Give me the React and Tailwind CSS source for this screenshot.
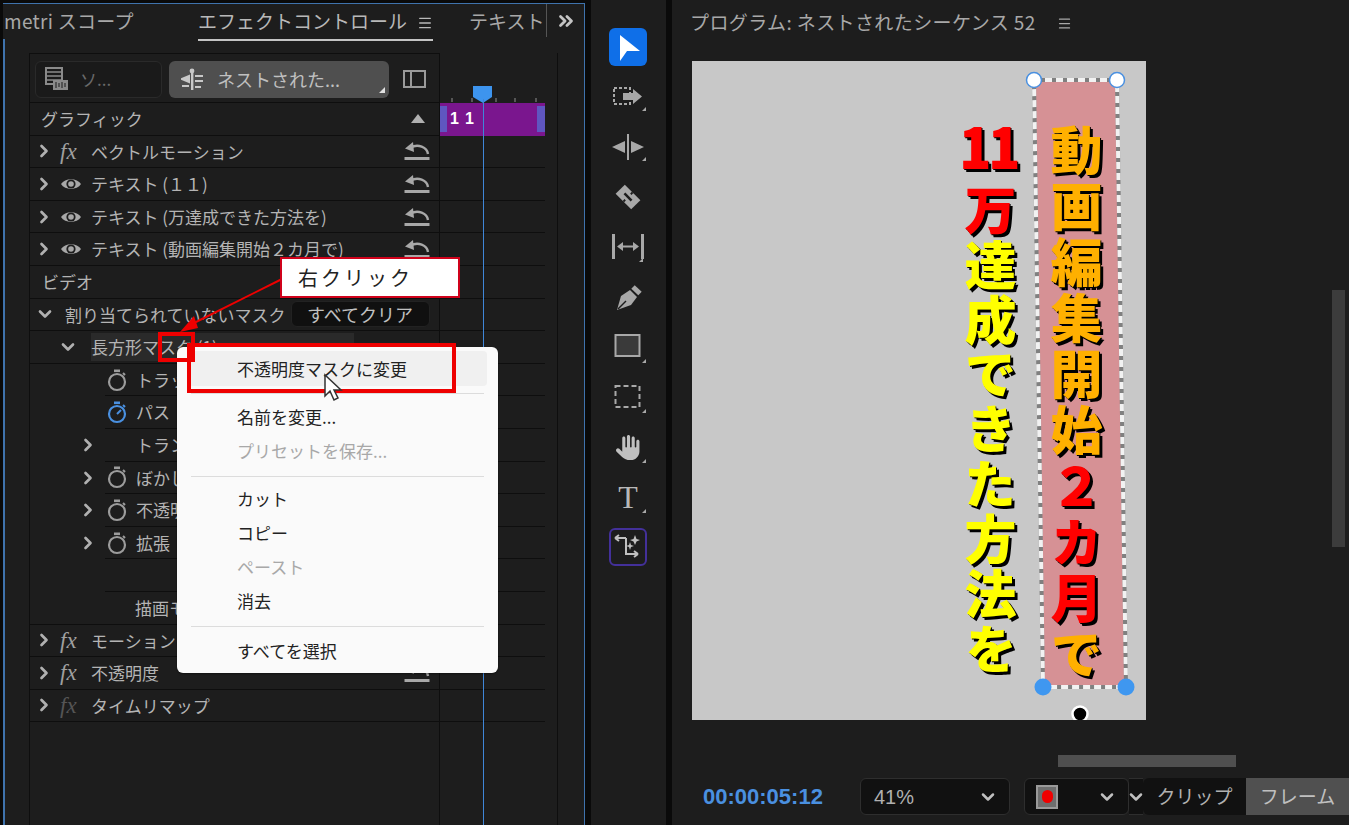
import React from 'react';
import { ChevronRight, ChevronDown, ChevronsRight, Menu } from 'lucide-react';
import { FaHand } from 'react-icons/fa6';

const FONT = "font-['Noto_Sans_CJK_JP','Noto_Sans',sans-serif]";

const Corner = ({ x = 33, y = 33 }) => <polygon points={`${x},${y} ${x + 4},${y} ${x + 4},${y - 4}`} fill="#a8a8a8" />;

const Eye = () => (
  <svg width="22" height="16" viewBox="0 0 22 16" className="shrink-0">
    <path d="M1 8 C5 1.5 17 1.5 21 8 C17 14.5 5 14.5 1 8 Z" fill="#a8a8a8" />
    <circle cx="11" cy="8" r="4.6" fill="#1d1d1d" />
    <circle cx="11" cy="8" r="2.8" fill="#a8a8a8" />
  </svg>
);

const Fx = ({ dim }) => (
  <span className={`w-[22px] shrink-0 font-['Liberation_Serif',serif] text-[23px] italic leading-none ${dim ? 'text-[#555555]' : 'text-[#a0a0a0]'}`}>fx</span>
);

const Reset = () => (
  <svg width="26" height="20" viewBox="0 0 26 20" className="shrink-0">
    <path d="M24 13 C23 6 14 2.5 6.5 6.5" fill="none" stroke="#a8a8a8" strokeWidth="2.4" />
    <polygon points="1,7.5 9,1 10,11" fill="#a8a8a8" />
    <rect x="0.5" y="16" width="25" height="3" fill="#a8a8a8" />
  </svg>
);

const Watch = ({ blue }) => {
  const c = blue ? '#4a90e0' : '#9c9c9c';
  return (
    <svg width="20" height="24" viewBox="0 0 20 24" className="shrink-0">
      <circle cx="10" cy="14" r="8" fill="none" stroke={c} strokeWidth="2.2" />
      <rect x="7" y="1.500" width="6" height="2.6" fill={c} />
      <path d="M16 5 L18 7" stroke={c} strokeWidth="2" />
      {blue && <path d="M10 14 L14 10" stroke={c} strokeWidth="2" />}
    </svg>
  );
};

const Chevron = () => <ChevronRight size={20} strokeWidth={3.2} className="shrink-0 text-[#b0b0b0]" />;

const topRows = [
  { label: 'ベクトルモーション', icon: 'fx' },
  { label: 'テキスト (１１)', icon: 'eye' },
  { label: 'テキスト (万達成できた方法を)', icon: 'eye' },
  { label: 'テキスト (動画編集開始２カ月で)', icon: 'eye' },
];

const subRows = [
  { label: 'トラック', watch: true },
  { label: 'パス', watch: 'blue' },
  { label: 'トランス', chevron: true },
  { label: 'ぼかし', chevron: true, watch: true },
  { label: '不透明度', chevron: true, watch: true },
  { label: '拡張', chevron: true, watch: true },
  { label: '' },
];

const bottomRows = [
  { label: 'モーション', icon: 'fx', reset: true },
  { label: '不透明度', icon: 'fx', reset: true },
  { label: 'タイムリマップ', icon: 'fxdim' },
];

const ROW = 'h-[32.6px] shrink-0';

const EffectRow = ({ row }) => (
  <div className={`${ROW} flex items-center border-b border-[#0e0e0e] pl-[4px] pr-[9px]`}>
    <Chevron />
    <div className="ml-[6px] flex w-[22px] justify-center">
      {row.icon === 'eye' ? <Eye /> : <Fx dim={row.icon === 'fxdim'} />}
    </div>
    <span className="ml-[9px] flex-1 whitespace-nowrap text-[17px] text-[#b4b4b4]">{row.label}</span>
    {(row.reset || row.icon === 'eye' || row.label === 'ベクトルモーション') && <Reset />}
  </div>
);

const SubRow = ({ row }) => (
  <div className={`${ROW} flex`}>
    <div className="flex w-[75px] items-center justify-end pr-[7px]">{row.chevron && <Chevron />}</div>
    <div className="flex flex-1 items-center border-b border-[#0e0e0e] pl-[2px]">
      <div className="w-[20px]">{row.watch && <Watch blue={row.watch === 'blue'} />}</div>
      <span className="ml-[9px] whitespace-nowrap text-[17px] text-[#b4b4b4]">{row.label}</span>
    </div>
  </div>
);

const EffectControls = () => (
  <div className="relative ml-[3px] mt-[3px] flex w-[582px] flex-col border-r border-t border-[#3f73ad] bg-[#1d1d1d]">
    <div className="absolute bottom-0 left-0 top-[35px] w-[1.5px] bg-[#3f73ad]" />
    {/* tabs */}
    <div className="flex h-[37px] shrink-0 items-end pl-[1px] text-[19px] text-[#a8a8a8]">
      <div className="h-full w-[194px] overflow-hidden whitespace-nowrap pt-[3px] tracking-[0.3px]">metri スコープ</div>
      <div className="flex h-full w-[235px] items-start justify-between border-b-2 border-[#c4c4c4] pt-[3px] text-[#b8b8b8]">
        <span>エフェクトコントロール</span>
        <Menu size={16} strokeWidth={2} className="mt-[8px]" />
      </div>
      <div className="ml-[36px] h-[33px] w-[78px] self-start overflow-hidden whitespace-nowrap border-r border-[#555555] pt-[3px]">テキスト</div>
      <ChevronsRight size={22} strokeWidth={3} className="ml-[8px] mt-[6px] self-start text-[#c4c4c4]" />
    </div>

    <div className="ml-[26px] mt-[12px] flex flex-1">
      {/* effect list */}
      <div className="flex w-[411px] flex-col border-l border-r border-t border-[#0e0e0e]">
        <div className="flex h-[49px] shrink-0 items-center gap-[7px] border-b border-[#0e0e0e] pb-[5px] pl-[5px] pt-[7px]">
          <div className="flex h-[37px] w-[127px] items-center gap-[11px] rounded-[6px] border border-[#2a2a2a] bg-[#1a1a1a] pl-[9px]">
            <svg width="24" height="24" viewBox="0 0 24 24">
              <rect x="1" y="1" width="16" height="16" fill="none" stroke="#8a8a8a" strokeWidth="2" />
              <path d="M1 5 H17 M1 9 H17 M1 13 H17" stroke="#8a8a8a" strokeWidth="1.5" />
              <rect x="8" y="13" width="15" height="10" fill="#8a8a8a" />
              <path d="M11 15 V21 M14 16 V20 M17 15 V21 M20 16 V20" stroke="#1a1a1a" strokeWidth="1" />
            </svg>
            <span className="text-[17px] text-[#6a6a6a]">ソ...</span>
          </div>
          <div className="relative flex h-[37px] w-[220px] items-center gap-[12px] rounded-[6px] bg-[#4f4f4f] pl-[12px] text-[#c0c0c0]">
            <svg width="24" height="24" viewBox="0 0 24 24">
              <circle cx="11" cy="4" r="2.4" fill="#c8c8c8" />
              <rect x="10" y="6" width="2.4" height="17" fill="#c8c8c8" />
              <path d="M1 12 L8 9 V15 Z M1 19 H8 M14 9 H22 M14 14 H22 M14 20 H20" fill="#c8c8c8" stroke="#c8c8c8" strokeWidth="2" />
            </svg>
            <span className="whitespace-nowrap text-[18px]">ネストされた...</span>
            <svg width="6" height="6" viewBox="0 0 6 6" className="absolute bottom-[5px] right-[4px]"><polygon points="0,6 6,6 6,0" fill="#e0e0e0" /></svg>
          </div>
          <svg width="24" height="20" viewBox="0 0 24 20" className="ml-[7px]">
            <rect x="1" y="2" width="21" height="16" fill="none" stroke="#9a9a9a" strokeWidth="2" />
            <rect x="7" y="2" width="2" height="16" fill="#9a9a9a" />
          </svg>
        </div>

        <div className={`${ROW} flex items-center justify-between border-b border-[#0e0e0e] pl-[11px] pr-[14px] text-[17px] text-[#b4b4b4]`}>
          <span>グラフィック</span>
          <svg width="14" height="9" viewBox="0 0 14 9"><polygon points="7,0 14,9 0,9" fill="#b0b0b0" /></svg>
        </div>
        {topRows.map((row) => <EffectRow key={row.label} row={row} />)}
        <div className={`${ROW} flex items-center border-b border-[#0e0e0e] pl-[12px] text-[17px] text-[#b4b4b4]`}>ビデオ</div>
        <div className={`${ROW} flex items-center border-b border-[#0e0e0e] pl-[5px]`}>
          <ChevronDown size={20} strokeWidth={3.2} className="shrink-0 text-[#b0b0b0]" />
          <span className="ml-[10px] whitespace-nowrap text-[17px] text-[#b4b4b4]">割り当てられていないマスク</span>
          <span className="ml-[5px] flex h-[26px] w-[139px] items-center justify-center rounded-[6px] border border-[#222222] bg-[#101010] text-[18px] text-[#c0c0c0]">すべてクリア</span>
        </div>
        <div className={`${ROW} flex items-center border-b border-[#0e0e0e] pl-[28px]`}>
          <ChevronDown size={20} strokeWidth={3.2} className="shrink-0 text-[#b0b0b0]" />
          <span className="ml-[13px] flex h-[28px] w-[263px] items-center whitespace-nowrap bg-[#2a2a2a] text-[17px] text-[#b4b4b4]">長方形マスク (1)</span>
        </div>
        {subRows.map((row, i) => <SubRow key={i} row={row} />)}
        <div className={`${ROW} flex items-center border-b border-[#0e0e0e] pl-[105px] text-[17px] text-[#b4b4b4]`}>描画モード</div>
        {bottomRows.map((row) => <EffectRow key={row.label} row={row} />)}
      </div>

      {/* mini timeline */}
      <div className="flex w-[118px] flex-col border-r border-[#0e0e0e]">
        <div className="relative h-[50px] shrink-0">
          <svg width="105" height="50" viewBox="0 0 105 50" className="absolute left-0 top-0">
            <path d="M12 45 V49 M32 45 V49 M56 45 V49 M75 45 V49 M96 45 V49" stroke="#909090" strokeWidth="1" />
            <path d="M33 33 H52 V44 L43 50 L33 44 Z" fill="#3d94ee" />
          </svg>
        </div>
        <div className={`${ROW} flex w-[105px] items-center justify-between bg-[#7a168e]`}>
          <div className="flex h-full items-center">
            <div className="h-[26px] w-[7px] bg-[#5f56c0]" />
            <span className="ml-[3px] font-['Liberation_Sans',sans-serif] text-[16px] font-bold tracking-[7px] text-white">11</span>
          </div>
          <div className="h-[26px] w-[8px] bg-[#5f56c0]" />
        </div>
        {Array.from({ length: 18 }).map((_, i) => (
          <div key={i} className={`${ROW} w-[105px] border-b border-[#0e0e0e]`} />
        ))}
      </div>
    </div>
    {/* playhead */}
    <div className="absolute bottom-0 left-[480px] top-[95px] w-px bg-[#3f86d8]" />
  </div>
);

const ToolButton = ({ children, active, ai }) => (
  <div className={`flex h-[38px] w-[38px] items-center justify-center rounded-[6px] ${active ? 'bg-[#0f6fe8]' : ''} ${ai ? 'border-2 border-[#43309a]' : ''}`}>
    {children}
  </div>
);

const G = '#a8a8a8';

const Tools = () => (
  <div className="ml-[6px] flex w-[75px] flex-col items-center gap-[12px] bg-[#1d1d1d] pr-[1px] pt-[28px]">
    <ToolButton active>
      <svg width="38" height="38" viewBox="0 0 38 38"><polygon points="11,7 31,23 18,23 11,33" fill="white" /></svg>
    </ToolButton>
    <ToolButton>
      <svg width="38" height="38" viewBox="0 0 38 38">
        <rect x="5" y="10" width="16" height="16" fill="none" stroke={G} strokeWidth="2" strokeDasharray="3 2" />
        <path d="M14 15 H24 V11 L33 18.500 L24 26 V22 H14 Z" fill={G} />
        <Corner />
      </svg>
    </ToolButton>
    <ToolButton>
      <svg width="38" height="38" viewBox="0 0 38 38">
        <rect x="18" y="6" width="2" height="26" fill={G} />
        <polygon points="3,19 16,13 16,25" fill={G} />
        <polygon points="35,19 22,13 22,25" fill={G} />
        <Corner />
      </svg>
    </ToolButton>
    <ToolButton>
      <svg width="38" height="38" viewBox="0 0 38 38">
        <g transform="rotate(45 19 19)">
          <rect x="8" y="12.500" width="22" height="13" fill={G} />
          <path d="M14 19 H24" stroke="#1d1d1d" strokeWidth="2.500" />
          <path d="M19 12.500 V15 M19 23 V25.500" stroke="#1d1d1d" strokeWidth="2" />
        </g>
      </svg>
    </ToolButton>
    <ToolButton>
      <svg width="38" height="38" viewBox="0 0 38 38">
        <rect x="3" y="6" width="3" height="25" fill={G} />
        <rect x="32" y="6" width="3" height="25" fill={G} />
        <path d="M11 18.500 H27" stroke={G} strokeWidth="2" />
        <polygon points="8,18.500 14,14 14,23" fill={G} />
        <polygon points="30,18.500 24,14 24,23" fill={G} />
        <Corner x={30} y={34} />
      </svg>
    </ToolButton>
    <ToolButton>
      <svg width="38" height="38" viewBox="0 0 38 38">
        <path d="M8 32 L12 18 L21 12 L28 19 L22 27 Z" fill={G} />
        <path d="M24 9 L31 15.500" stroke={G} strokeWidth="5" />
        <path d="M9 31 L17 23" stroke="#1d1d1d" strokeWidth="1.500" />
      </svg>
    </ToolButton>
    <ToolButton>
      <svg width="38" height="38" viewBox="0 0 38 38">
        <rect x="6.500" y="7" width="24" height="21" fill="#3a3a3a" stroke={G} strokeWidth="2" />
        <Corner y={35} />
      </svg>
    </ToolButton>
    <ToolButton>
      <svg width="38" height="38" viewBox="0 0 38 38">
        <rect x="6.500" y="8" width="24" height="21" fill="none" stroke={G} strokeWidth="2" strokeDasharray="5 3" />
        <Corner y={35} />
      </svg>
    </ToolButton>
    <ToolButton>
      <div className="relative flex h-[38px] w-[38px] items-center justify-center">
        <FaHand size={25} className="text-[#c0c0c0]" />
        <svg width="38" height="38" viewBox="0 0 38 38" className="absolute left-0 top-0"><Corner y={35} /></svg>
      </div>
    </ToolButton>
    <ToolButton>
      <div className="relative flex h-[38px] w-[38px] items-center justify-center font-['Liberation_Serif',serif] text-[32px] text-[#b8b8b8]">
        T
        <svg width="38" height="38" viewBox="0 0 38 38" className="absolute left-0 top-0"><Corner y={35} /></svg>
      </div>
    </ToolButton>
    <ToolButton ai>
      <svg width="34" height="34" viewBox="0 0 34 34">
        <path d="M15 8 H4 M4 8 L8 5 M4 8 L8 11 M15 8 V24 H27 M27 24 L23 21 M27 24 L23 27" fill="none" stroke="#c0c0c0" strokeWidth="2" />
        <path d="M24 5 L25.500 9 L29 10 L25.500 11.500 L24 15 L22.500 11.500 L19 10 L22.500 9 Z" fill="#c0c0c0" />
        <path d="M19 12 L20 15 L23 16 L20 17 L19 20 L18 17 L15 16 L18 15 Z" fill="#c0c0c0" />
      </svg>
    </ToolButton>
  </div>
);

const Chars = ({ text, color, className = '' }) => <span className={className} style={{ color }}>{text}</span>;

const VERT = "[writing-mode:vertical-rl] text-[52px] font-black leading-[58px] [text-shadow:3px_3px_0_#000,1px_1px_0_#000]";

const Preview = () => (
  <div className="relative ml-[20px] flex h-[659px] w-[454px] shrink-0 justify-end bg-[#c8c8c8] pr-[41px] pt-[65px]">
    <svg width="454" height="659" viewBox="0 0 454 659" className="absolute left-0 top-0">
      <polygon points="342,19 425,19 434,626 351,626" fill="#d69195" />
      <polygon points="342,19 425,19 434,626 351,626" fill="none" stroke="#808080" strokeWidth="4" />
      <polygon points="342,19 425,19 434,626 351,626" fill="none" stroke="#f2f2f2" strokeWidth="4" strokeDasharray="7 4" />
      <circle cx="342" cy="19" r="7.500" fill="white" stroke="#4a90e0" strokeWidth="1.500" />
      <circle cx="425" cy="19" r="7.500" fill="white" stroke="#4a90e0" strokeWidth="1.500" />
      <circle cx="351" cy="626" r="8.500" fill="#3f97f0" />
      <circle cx="434" cy="626" r="8.500" fill="#3f97f0" />
      <circle cx="388" cy="653" r="7.500" fill="black" stroke="white" strokeWidth="2.500" />
    </svg>
    <div className={`relative mr-[28px] -mt-[11px] tracking-[2.9px] ${VERT}`}>
      <span className="mb-[11px] inline-block text-[58px] text-[#ff0000] [text-combine-upright:all]">11</span>
      <Chars text="万" color="#ff0000" />
      <Chars text="達成できた方法を" color="#ffff00" />
    </div>
    <div className={`relative -mt-[2px] tracking-[4px] ${VERT}`}>
      <Chars text="動画編集開始" color="#ffb000" />
      <Chars text="２カ月" color="#ff0000" />
      <Chars text="で" color="#ffb000" />
    </div>
  </div>
);

const Dropdown = ({ className, children }) => (
  <div className={`flex h-[37px] items-center justify-between rounded-[6px] border border-[#2e2e2e] bg-[#111111] pr-[11px] ${className}`}>
    {children}
    <ChevronDown size={20} strokeWidth={3} className="text-[#c0c0c0]" />
  </div>
);

const Program = () => (
  <div className="relative ml-[6px] flex flex-1 flex-col bg-[#1d1d1d]">
    <div className="flex h-[61px] shrink-0 items-start pl-[18px] pt-[8px] text-[19px] tracking-[0.4px] text-[#a8a8a8]">
      <span className="whitespace-nowrap">プログラム: ネストされたシーケンス 52</span>
      <Menu size={15} strokeWidth={2} className="ml-[21px] mt-[8px]" />
    </div>
    <Preview />
    <div className="ml-[386px] mt-[35px] h-[12px] w-[178px] shrink-0 bg-[#4f4f4f]" />
    <div className="mt-[11px] flex items-center">
      <span className="ml-[31px] w-[157px] font-['Liberation_Sans',sans-serif] text-[22px] font-bold text-[#4a90e0]">00:00:05:12</span>
      <Dropdown className="w-[150px] pl-[13px]">
        <span className="font-['Liberation_Sans',sans-serif] text-[20px] text-[#b0b0b0]">41%</span>
      </Dropdown>
      <Dropdown className="ml-[14px] w-[105px] pl-[11px]">
        <span className="flex h-[24px] w-[22px] items-center justify-center border-2 border-[#9a9a9a] bg-[#6e6e6e]">
          <span className="h-[13px] w-[11px] rounded-full bg-[#f00000]" />
        </span>
      </Dropdown>
      <div className="flex h-[37px] w-[14px] items-center overflow-hidden border-y border-[#2e2e2e] bg-[#111111]">
        <ChevronDown size={20} strokeWidth={3} className="-ml-[3px] shrink-0 text-[#c0c0c0]" />
      </div>
      <div className="flex h-[37px] w-[103px] items-center justify-center rounded-l-[6px] bg-[#111111] text-[19px] text-[#b0b0b0]">クリップ</div>
      <div className="flex h-[37px] flex-1 items-center justify-center bg-[#505050] text-[19px] text-[#c0c0c0]">フレーム</div>
    </div>
    {/* vertical scrollbar */}
    <div className="absolute right-[4px] top-[290px] h-[257px] w-[13px] bg-[#3c3c3c]" />
  </div>
);

const menuItems = [
  [{ label: '不透明度マスクに変更', on: true }],
  [{ label: '名前を変更...' }, { label: 'プリセットを保存...', off: true }],
  [{ label: 'カット' }, { label: 'コピー' }, { label: 'ペースト', off: true }, { label: '消去' }],
  [{ label: 'すべてを選択' }],
];

const ContextMenu = () => (
  <div className="absolute left-[177px] top-[347px] w-[321px] rounded-[6px] bg-[#fafafa] px-[11px] pb-[5px] pt-[4px] shadow-[0_1px_2px_rgba(0,0,0,0.4)]">
    {menuItems.map((group, i) => (
      <div key={i}>
        {i > 0 && <div className={`mx-[3px] h-px bg-[#dcdcdc] ${i === 2 ? 'mb-[5px] mt-[8px]' : i === 3 ? 'mb-[7px] mt-[8px]' : 'mb-[6px] mt-[7px]'}`} />}
        {group.map((item) => (
          <div
            key={item.label}
            className={`flex items-center rounded-[4px] pl-[49px] text-[17px] ${item.on ? 'h-[35px] bg-[#f0f0f0]' : 'h-[34px]'} ${item.off ? 'text-[#a8a8a8]' : 'text-[#222222]'}`}
          >
            {item.label}
          </div>
        ))}
      </div>
    ))}
  </div>
);

const Annotations = () => (
  <>
    <ContextMenu />
    <div className="absolute left-[158px] top-[332px] h-[30px] w-[37px] border-[4px] border-[#ee0000]" />
    <div className="absolute left-[187px] top-[343px] h-[50px] w-[269px] border-[4px] border-[#ee0000]" />
    <svg width="120" height="60" viewBox="0 0 120 60" className="absolute left-[170px] top-[276px]">
      <path d="M112 3 L18 50" stroke="#ee0000" strokeWidth="2" />
      <polygon points="10,56 24,40 28,52" fill="#ee0000" />
    </svg>
    <div className="absolute left-[280px] top-[257px] flex h-[41px] w-[180px] items-center border-2 border-[#d0021b] bg-white pl-[16px] text-[20px] tracking-[3px] text-[#222222]">右クリック</div>
    <svg width="22" height="30" viewBox="0 0 22 30" className="absolute left-[323px] top-[373px]">
      <path d="M2 2 V23 L7 18 L11 27 L15 25 L11 17 L18 17 Z" fill="white" stroke="#333333" strokeWidth="1.500" />
    </svg>
  </>
);

export default function App() {
  return (
    <div className={`relative flex h-[825px] w-[1349px] overflow-hidden bg-[#0a0a0a] ${FONT}`}>
      <EffectControls />
      <Tools />
      <Program />
      <Annotations />
    </div>
  );
}
